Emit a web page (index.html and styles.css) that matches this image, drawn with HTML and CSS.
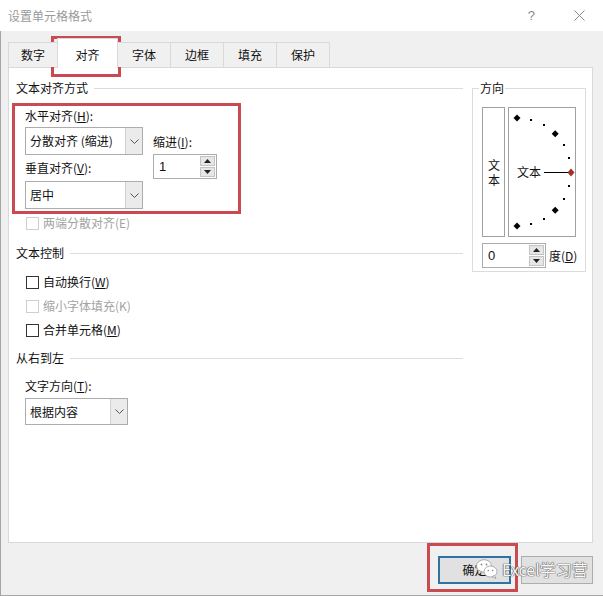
FILE: index.html
```html
<!DOCTYPE html>
<html>
<head>
<meta charset="utf-8">
<link rel="stylesheet" href="styles.css">
</head>
<body>
<div class="window">
  <div class="titlebar">
    <span class="title">设置单元格格式</span>
    <span class="help">?</span>
    <svg class="close" width="11" height="11" viewBox="0 0 11 11"><path d="M0.5 0.5L10.5 10.5M10.5 0.5L0.5 10.5" stroke="#8a8a8a" stroke-width="1"/></svg>
  </div>
  <div class="client">
    <div class="tabs">
      <div class="tab first">数字</div>
      <div class="tab active">对齐</div>
      <div class="tab">字体</div>
      <div class="tab">边框</div>
      <div class="tab">填充</div>
      <div class="tab">保护</div>
    </div>
    <div class="panel">
      <div class="leftcol">
        <div class="heading"><span>文本对齐方式</span></div>
        <div class="align-block">
          <div class="sub-left">
            <div class="label">水平对齐(<u>H</u>):</div>
            <div class="combo combo-wide mt3">
              <span class="val">分散对齐 (缩进)</span>
              <span class="arrow"><svg width="9" height="5" viewBox="0 0 9 5"><polyline points="0.5,0.5 4.5,4.5 8.5,0.5" fill="none" stroke="#555" stroke-width="1"/></svg></span>
            </div>
            <div class="label mt5">垂直对齐(<u>V</u>):</div>
            <div class="combo combo-wide mt5">
              <span class="val">居中</span>
              <span class="arrow"><svg width="9" height="5" viewBox="0 0 9 5"><polyline points="0.5,0.5 4.5,4.5 8.5,0.5" fill="none" stroke="#555" stroke-width="1"/></svg></span>
            </div>
          </div>
          <div class="sub-right">
            <div class="label">缩进(<u>I</u>):</div>
            <div class="spin mt4">
              <span class="val">1</span>
              <span class="spinbtns">
                <span class="sb"><svg width="7" height="4" viewBox="0 0 7 4"><polygon points="3.5,0 7,4 0,4" fill="#222"/></svg></span>
                <span class="sb"><svg width="7" height="4" viewBox="0 0 7 4"><polygon points="0,0 7,0 3.5,4" fill="#222"/></svg></span>
              </span>
            </div>
          </div>
        </div>
        <div class="check disabled cb-first"><span class="box"></span><span>两端分散对齐(E)</span></div>

        <div class="heading mt14"><span>文本控制</span></div>
        <div class="check mt13"><span class="box"></span><span>自动换行(<u>W</u>)</span></div>
        <div class="check disabled mt8"><span class="box"></span><span>缩小字体填充(K)</span></div>
        <div class="check mt8"><span class="box"></span><span>合并单元格(<u>M</u>)</span></div>

        <div class="heading mt12"><span>从右到左</span></div>
        <div class="label indent mt12">文字方向(<u>T</u>):</div>
        <div class="combo combo-dir indent mt4">
          <span class="val">根据内容</span>
          <span class="arrow"><svg width="9" height="5" viewBox="0 0 9 5"><polyline points="0.5,0.5 4.5,4.5 8.5,0.5" fill="none" stroke="#555" stroke-width="1"/></svg></span>
        </div>
      </div>

      <div class="dir">
        <div class="dir-title">方向</div>
        <div class="dir-row">
          <div class="vbox"><span class="vtext">文本</span></div>
          <div class="dial">
            <svg width="66" height="128" viewBox="0 0 66 128">
              <g fill="#000">
                <polygon points="8,6.5 11.5,10 8,13.5 4.5,10"/>
                <polygon points="46.2,22.3 49.7,25.8 46.2,29.3 42.7,25.8"/>
                <polygon points="46.2,98.7 49.7,102.2 46.2,105.7 42.7,102.2"/>
                <polygon points="8,114.5 11.5,118 8,121.5 4.5,118"/>
                <rect x="21" y="11" width="2" height="2"/>
                <rect x="34" y="16" width="2" height="2"/>
                <rect x="54" y="36" width="2" height="2"/>
                <rect x="59" y="49" width="2" height="2"/>
                <rect x="59" y="77" width="2" height="2"/>
                <rect x="54" y="90" width="2" height="2"/>
                <rect x="34" y="110" width="2" height="2"/>
                <rect x="21" y="115" width="2" height="2"/>
              </g>
              <line x1="35" y1="64.5" x2="59" y2="64.5" stroke="#000" stroke-width="1"/>
              <polygon points="62,60.5 65.5,64.5 62,68.5 58.5,64.5" fill="#a2302c"/>
              <text x="8" y="69" class="dial-text">文本</text>
            </svg>
          </div>
        </div>
        <div class="deg-row">
          <div class="spin">
            <span class="val">0</span>
            <span class="spinbtns">
              <span class="sb"><svg width="7" height="4" viewBox="0 0 7 4"><polygon points="3.5,0 7,4 0,4" fill="#222"/></svg></span>
              <span class="sb"><svg width="7" height="4" viewBox="0 0 7 4"><polygon points="0,0 7,0 3.5,4" fill="#222"/></svg></span>
            </span>
          </div>
          <span class="deg-label">度(<u>D</u>)</span>
        </div>
      </div>
    </div>

    <div class="buttons">
      <div class="btn btn-default">确定</div>
      <div class="btn"></div>
    </div>
  </div>

  <div class="mark mark-tab"></div>
  <div class="mark mark-align"></div>
  <div class="mark mark-ok"></div>

  <div class="watermark">
    <svg width="24" height="22" viewBox="0 0 24 22">
      <ellipse cx="9" cy="8" rx="7.5" ry="6.3" fill="#fff" stroke="#9a9a9a" stroke-width="0.8"/>
      <path d="M4 12.5 L3 16 L7 13.8 Z" fill="#fff" stroke="#9a9a9a" stroke-width="0.8"/>
      <ellipse cx="15.5" cy="13.5" rx="6.5" ry="5.5" fill="#fff" stroke="#9a9a9a" stroke-width="0.8"/>
      <path d="M19.5 17.5 L21 20.5 L17 18.6 Z" fill="#fff" stroke="#9a9a9a" stroke-width="0.8"/>
      <circle cx="6.5" cy="6.5" r="0.9" fill="#888"/>
      <circle cx="11.5" cy="6.5" r="0.9" fill="#888"/>
      <circle cx="13.3" cy="12.5" r="0.8" fill="#888"/>
      <circle cx="17.7" cy="12.5" r="0.8" fill="#888"/>
    </svg>
    <span class="wm-text">Excel学习营</span>
  </div>
</div>
</body>
</html>
```

FILE: styles.css
```css
* {
  box-sizing: border-box;
}

html, body {
  margin: 0;
  padding: 0;
}

body {
  width: 603px;
  height: 596px;
  overflow: hidden;
  font-family: "Noto Sans CJK SC", "Microsoft YaHei", sans-serif;
  font-size: 12px;
  line-height: 16px;
  color: #111;
  background: #f0f0f0;
}

u {
  text-decoration: underline;
  text-underline-offset: 1px;
}

.window {
  position: relative;
  width: 603px;
  height: 596px;
  display: flex;
  flex-direction: column;
}

/* title bar */
.titlebar {
  flex: none;
  height: 31px;
  background: #fff;
  display: flex;
  align-items: center;
  padding-left: 8px;
}

.title {
  flex: 1;
  color: #9a9a9a;
}

.help {
  color: #8a8a8a;
  font-size: 13px;
  font-family: "Liberation Sans", sans-serif;
  margin-right: 39px;
}

.close {
  margin-right: 18px;
}

/* client area */
.client {
  flex: 1;
  display: flex;
  flex-direction: column;
  border-left: 1px solid #a6a6a6;
  border-bottom: 1px solid #a6a6a6;
  padding: 11px 10px 0 7px;
}

.tabs {
  display: flex;
  align-items: flex-end;
  height: 25px;
  position: relative;
  z-index: 1;
}

.tab {
  width: 53px;
  height: 25px;
  border-top: 1px solid #d9d9d9;
  border-right: 1px solid #d9d9d9;
  display: flex;
  align-items: center;
  justify-content: center;
  background: #f0f0f0;
}

.tab.first {
  width: 50px;
  border-left: 1px solid #d9d9d9;
}

.tab.active {
  width: 61px;
  height: 30px;
  margin-left: -1px;
  margin-bottom: -1px;
  padding-top: 2px;
  border-left: 1px solid #d9d9d9;
  background: #fff;
}

.panel {
  height: 476px;
  border: 1px solid #d9d9d9;
  background: #fff;
  display: flex;
  padding: 12px 6px 0 7px;
}

.leftcol {
  width: 447px;
  display: flex;
  flex-direction: column;
}

.heading {
  display: flex;
  align-items: center;
}

.heading::after {
  content: "";
  flex: 1;
  height: 1px;
  background: #dcdcdc;
  margin-left: 6px;
}

.align-block {
  display: flex;
  margin-top: 12px;
}

.sub-left {
  margin-left: 9px;
  width: 118px;
  display: flex;
  flex-direction: column;
}

.sub-right {
  margin-left: 10px;
  margin-top: 26px;
  display: flex;
  flex-direction: column;
}

.mt3 { margin-top: 3px; }
.mt4 { margin-top: 4px; }
.mt5 { margin-top: 5px; }
.mt8 { margin-top: 8px; }
.mt12 { margin-top: 12px; }
.mt13 { margin-top: 13px; }
.mt14 { margin-top: 14px; }

.indent {
  margin-left: 9px;
}

/* combo boxes */
.combo {
  display: flex;
  height: 28px;
  border: 1px solid #acacac;
  background: #fff;
}

.combo-wide {
  width: 118px;
}

.combo-dir {
  width: 103px;
  height: 27px;
}

.combo .val {
  flex: 1;
  display: flex;
  align-items: center;
  padding-left: 4px;
  white-space: nowrap;
}

.combo .arrow {
  width: 17px;
  display: flex;
  align-items: center;
  justify-content: center;
  background: #ebebeb;
  border-left: 1px solid #d0d0d0;
}

/* spinners */
.spin {
  display: flex;
  width: 64px;
  height: 25px;
  border: 1px solid #acacac;
  background: #fff;
  padding: 1px;
}

.spin .val {
  flex: 1;
  display: flex;
  align-items: center;
  padding-left: 4px;
  font-family: "Liberation Sans", sans-serif;
  font-size: 13px;
}

.spinbtns {
  width: 15px;
  display: flex;
  flex-direction: column;
  gap: 1px;
}

.sb {
  flex: 1;
  display: flex;
  align-items: center;
  justify-content: center;
  background: #e6e6e6;
  border: 1px solid #c4c4c4;
}

/* checkboxes */
.check {
  display: flex;
  align-items: center;
  margin-left: 10px;
  height: 16px;
}

.cb-first {
  margin-top: 6px;
}

.check .box {
  width: 13px;
  height: 13px;
  border: 1px solid #333;
  background: #fff;
  margin-right: 4px;
}

.check.disabled {
  color: #a3a3a3;
}

.check.disabled .box {
  border-color: #cfcfcf;
}

/* direction group */
.dir {
  width: 114px;
  height: 184px;
  margin-left: 9px;
  margin-top: 8px;
  border: 1px solid #dcdcdc;
  padding-left: 9px;
  display: flex;
  flex-direction: column;
}

.dir-title {
  align-self: flex-start;
  margin-top: -9px;
  margin-left: -3px;
  padding: 0 1px;
  background: #fff;
}

.dir-row {
  display: flex;
  gap: 3px;
  margin-top: 11px;
}

.vbox {
  width: 23px;
  height: 130px;
  border: 1px solid #a0a0a0;
  display: flex;
  align-items: center;
  justify-content: center;
}

.vtext {
  writing-mode: vertical-rl;
  letter-spacing: 3px;
  margin-top: 3px;
}

.dial {
  width: 68px;
  height: 130px;
  border: 1px solid #a0a0a0;
}

.dial svg {
  display: block;
}

.dial-text {
  font-family: "Noto Sans CJK SC", sans-serif;
  font-size: 12px;
  fill: #111;
}

.deg-row {
  display: flex;
  align-items: center;
  margin-top: 6px;
}

.deg-label {
  margin-left: 3px;
}

/* buttons */
.buttons {
  display: flex;
  justify-content: flex-end;
  gap: 10px;
  margin-top: 13px;
}

.btn {
  width: 72px;
  height: 28px;
  background: #e1e1e1;
  border: 1px solid #adadad;
  display: flex;
  align-items: center;
  justify-content: center;
}

.btn-default {
  width: 73px;
  border: 2px solid #2f72a6;
}

/* annotation overlays */
.mark {
  position: absolute;
  border: 3px solid #c94a50;
}

.mark-tab {
  left: 51px;
  top: 36px;
  width: 70px;
  height: 41px;
}

.mark-align {
  left: 12px;
  top: 103px;
  width: 229px;
  height: 111px;
}

.mark-ok {
  left: 427px;
  top: 543px;
  width: 91px;
  height: 49px;
}

.watermark {
  position: absolute;
  left: 475px;
  top: 558px;
  display: flex;
  align-items: center;
}

.wm-text {
  margin-left: 3px;
  font-size: 16px;
  line-height: 20px;
  color: #f7f7f7;
  text-shadow: 0 0 1px #555, 0 0 1px #555, 0 0 1px #555;
}
```
